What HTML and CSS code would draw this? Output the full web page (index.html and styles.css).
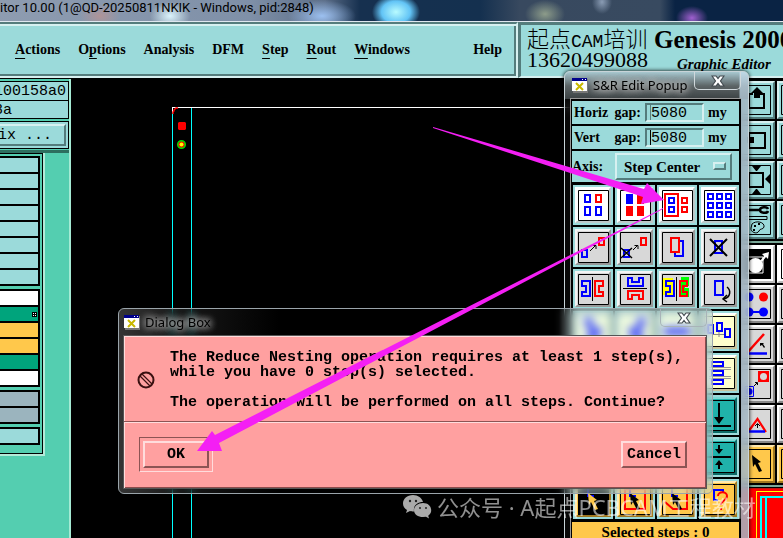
FILE: index.html
```html
<!DOCTYPE html>
<html lang="en">
<head>
<meta charset="utf-8">
<title>Graphic Editor</title>
<link rel="stylesheet" href="styles.css">
</head>
<body>
<svg class="defs" aria-hidden="true">
  <defs>
    <symbol id="close" viewBox="0 0 14 12"><path d="M1 1h4l2 2.500 2-2.500h4L9.500 6 13 11H9L7 8.500 5 11H1l3.500-5z" fill="#fff" stroke="#444c52" stroke-width="1.200"/></symbol>
    <symbol id="xwin" viewBox="0 0 16 15"><path d="M1 1h15v14H1z" fill="#777"/><path d="M0 0h15v13H0z" fill="#fff"/><path d="M0 0h15v3H0z" fill="#00008b"/><path d="M10 1h1v1h-1zM13 1h1v1h-1z" fill="#fff"/><path d="M4 5l7 7M11 5l-7 7" stroke="#c8b800" stroke-width="2"/></symbol>
    <symbol id="frame" viewBox="0 0 40 40"><path d="M5.500 5.500h30v30h-30z" fill="none" stroke="#000"/></symbol>
    <symbol id="pointer" viewBox="0 0 12 18"><path d="M0 0l9 7-3 1 4 8-3 1-4-8-2 3z"/></symbol>
  </defs>
</svg>

<div class="titlebar">itor 10.00 (1@QD-20250811NKIK - Windows, pid:2848)</div>

<header class="header">
  <nav class="menubar">
    <a href="#"><u>A</u>ctions</a>
    <a href="#">O<u>p</u>tions</a>
    <a href="#">Analysis</a>
    <a href="#">DFM</a>
    <a href="#"><u>S</u>tep</a>
    <a href="#"><u>R</u>out</a>
    <a href="#"><u>W</u>indows</a>
    <a href="#" class="help">Help</a>
  </nav>
  <div class="brand">
    <div class="contact"><div class="contact-name">起点<span>CAM</span>培训</div><div class="phone">13620499088</div></div>
    <div class="product"><h1>Genesis 2000</h1><p>Graphic Editor</p></div>
  </div>
</header>

<main class="main">
  <aside class="side">
    <div class="names"><div>100158a0</div><div>8a</div></div>
    <div class="matrix"><button type="button">ix ...</button></div>
    <div class="layers">
      <div class="stack">
        <ul><li></li><li></li><li></li><li></li><li></li><li></li><li></li><li></li></ul>
        <ul><li class="white"></li><li class="green"><svg width="5" height="5" viewBox="0 0 5 5"><path d="M0 0h5v5H0z"/><path d="M1 1h1v1H1zM3 1h1v1H3zM1 3h1v1H1zM3 3h1v1H3z" fill="#fff"/></svg></li><li class="amber"></li><li class="amber"></li><li class="green"></li><li class="white"></li></ul>
        <ul><li class="slate"></li><li class="slate"></li></ul>
        <ul><li></li></ul>
      </div>
    </div>
  </aside>

  <section class="canvas">
    <svg width="100%" height="100%">
      <path d="M101.500 30V900M120.500 30V900" stroke="#00ffff"/>
      <path d="M101 29.500H1200" stroke="#fff"/><path d="M101.500 29v6" stroke="#fff"/>
      <path d="M102 36v-2l1-1v-1l2-2h2" fill="none" stroke="#f00" stroke-width="1.500"/>
      <path d="M108 44h6l1 1v6l-1 1h-6l-1-1v-6z" fill="#f00"/>
      <circle cx="110.500" cy="66.500" r="3.800" fill="#f00" stroke="#00e000" stroke-width="1.500"/>
      <circle cx="110.500" cy="66.500" r="2" fill="#ff0"/>
    </svg>
  </section>

  <aside class="tools">
    <div class="toolgrid">
      <button type="button" aria-label="Up"><svg viewBox="2 2 34 34"><path d="M4.500 4.500h29v29h-29z" class="ln"/><path d="M16 13h-4v14h15V13h-4" class="ln2"/><path d="M20 6l6 6h-3v5h-6v-5h-3z"/></svg></button>
      <button type="button" aria-label="Up more"><svg viewBox="2 2 34 34"><path d="M4.500 4.500h29v29h-29z" class="ln"/></svg></button>
      <button type="button" aria-label="Left"><svg viewBox="2 2 34 34"><path d="M4.500 4.500h29v29h-29z" class="ln"/><path d="M12 12h16v15H12z" class="ln2"/><path d="M10 16h7v6h-7z"/></svg></button>
      <button type="button" aria-label="Right"><svg viewBox="2 2 34 34"><path d="M4.500 4.500h29v29h-29z" class="ln"/></svg></button>
      <button type="button" aria-label="Fit"><svg viewBox="2 2 34 34"><path d="M4.500 4.500h29v29h-29z" class="ln"/><path d="M12 12h14v14H12z" class="ln2"/><path d="M15 5h9l-4 5h-1zM28 18l5-5v10zM15 33h9l-4-5h-1z"/></svg></button>
      <button type="button" aria-label="Zoom"><svg viewBox="2 2 34 34"><path d="M4.500 4.500h29v29h-29z" class="ln"/></svg></button>
      <button type="button" aria-label="Setup"><svg viewBox="2 2 34 34"><path d="M4.500 4.500h29v29h-29z" class="ln"/><path d="M8 9h15M31 8c-1-3-8-2-8 1s7 4 8 1" fill="none" stroke="#000" stroke-width="2.500"/><path d="M8 15.500h22v3H8z" class="ln"/><path d="M15 23c4-4 13-2 12 3-1 3-4 1-5 4-2 4-9 1-8-3z" class="ln"/><path d="M17 24h2v2h-2zM21 22h2v2h-2zM16 28h2v2h-2z"/></svg></button>
      <button type="button" aria-label="Colors"><svg viewBox="2 2 34 34"><path d="M4.500 4.500h29v29h-29z" class="ln"/></svg></button>
    </div>
    <div class="rule"></div>
    <div class="toolgrid gray">
      <button type="button" class="w" aria-label="Drag"><svg viewBox="2 2 34 34"><path d="M4 4h30v30H4z"/><circle cx="18.500" cy="20.500" r="7.500" fill="#fff"/><path d="M9 12h17v16H9" fill="none" stroke="#fff"/><path d="M23 16l4-5-2-2 7-2-1 7-2-2-4 5z" fill="#fff"/></svg></button>
      <button type="button" class="w" aria-label="Drag many"><svg viewBox="2 2 34 34"><path d="M4.500 4.500h29v29h-29z" class="ln"/></svg></button>
      <button type="button" aria-label="Connect"><svg viewBox="2 2 34 34"><path d="M4.500 4.500h29v29h-29z" class="ln"/><g fill="#00f"><circle cx="12" cy="12" r="4.500"/><circle cx="12" cy="27" r="4.500"/><circle cx="26.500" cy="27" r="4.500"/><path d="M12 26h14v2H12z"/></g><circle cx="26.500" cy="12" r="4.500" fill="#f00"/></svg></button>
      <button type="button" aria-label="Connect all"><svg viewBox="2 2 34 34"><path d="M4.500 4.500h29v29h-29z" class="ln"/></svg></button>
      <button type="button" aria-label="Angle"><svg viewBox="2 2 34 34"><path d="M4.500 4.500h29v29h-29z" class="ln"/><path d="M10 28L27 9" stroke="#f00" stroke-width="2.500"/><path d="M10 28.500h20" stroke="#00f" stroke-width="2.500"/><path d="M23 18h4l-1 1 2 3-1 1-2-3-2 1z"/></svg></button>
      <button type="button" aria-label="Angle all"><svg viewBox="2 2 34 34"><path d="M4.500 4.500h29v29h-29z" class="ln"/></svg></button>
      <button type="button" aria-label="Swap"><svg viewBox="2 2 34 34"><path d="M4.500 4.500h29v29h-29z" class="ln"/><path d="M21 6h11v11H21z" fill="#f00"/><circle cx="26.500" cy="11.500" r="3.500" fill="#d8d8d8"/><path d="M8 21.500h8.500v10H8z" fill="none" stroke="#00f"/><circle cx="12" cy="26.500" r="3.500" fill="#00f"/><path d="M17 21l3-3M18 17.500h2.500V20" class="ln"/></svg></button>
      <button type="button" aria-label="Swap all"><svg viewBox="2 2 34 34"><path d="M4.500 4.500h29v29h-29z" class="ln"/></svg></button>
      <button type="button" aria-label="Triangle"><svg viewBox="2 2 34 34"><path d="M4.500 4.500h29v29h-29z" class="ln"/><path d="M11 27l9.500-13L29 27" fill="none" stroke="#f00" stroke-width="2.200"/><path d="M11 26.500h17" stroke="#00f" stroke-width="2.500"/><path d="M20.500 23v-4M18 21l2.500-2.500L23 21" class="ln"/></svg></button>
      <button type="button" aria-label="Triangle all"><svg viewBox="2 2 34 34"><path d="M4.500 4.500h29v29h-29z" class="ln"/></svg></button>
      <button type="button" class="o" aria-label="Select"><svg viewBox="2 2 34 34"><path d="M4.500 4.500h29v29h-29z" class="ln"/><use href="#pointer" x="15" y="10" width="12" height="18"/></svg></button>
      <button type="button" class="o" aria-label="Select area"><svg viewBox="2 2 34 34"><path d="M4.500 4.500h29v29h-29z" class="ln"/></svg></button>
    </div>
    <div class="rule"></div>
    <div class="overview"><div></div></div>
  </aside>
</main>

<section class="popup glass">
  <div class="caption"><svg width="16" height="15"><use href="#xwin"/></svg><h2>S&amp;R Edit Popup</h2><button type="button" class="close" aria-label="Close"><svg width="14" height="12"><use href="#close"/></svg></button></div>
  <div class="popup-body">
    <div class="field"><label for="hgap"><span>Horiz</span> <span>gap:</span></label><input id="hgap" value="5080"><span>my</span></div>
    <div class="field"><label for="vgap"><span>Vert</span> <span>gap:</span></label><input id="vgap" class="focus" value="5080"><span>my</span></div>
    <div class="field axis"><label for="axis">Axis:</label><div class="pick"><select id="axis"><option>Step Center</option></select><i></i></div></div>
    <div class="tiles">
      <button type="button" class="w" aria-label="Step table"><svg viewBox="4 4 32 32"><use href="#frame" width="40" height="40"/><g class="b"><path d="M12 10h5v7h-5zM12 22h5v8h-5zM23 22h5v8h-5z"/></g><path class="r" d="M23 10h5v7h-5z"/></svg></button>
      <button type="button" class="w" aria-label="Fill table"><svg viewBox="4 4 32 32"><use href="#frame" width="40" height="40"/><path d="M11 9h7v10h-7z" fill="#00f"/><path d="M22 9h7v10h-7zM11 21h7v10h-7zM22 21h7v10h-7z" fill="#f00"/></svg></button>
      <button type="button" class="w" aria-label="Reduce nesting"><svg viewBox="4 4 32 32"><use href="#frame" width="40" height="40"/><path class="r" d="M8 9h13v22H8zM25 13h5v5h-5zM25 22h5v5h-5z"/><path class="b" d="M12 13h5v5h-5zM12 22h5v5h-5z"/></svg></button>
      <button type="button" class="w" aria-label="Matrix"><svg viewBox="4 4 32 32"><use href="#frame" width="40" height="40"/><path class="b" d="M9 9h5v5H9zM18 9h5v5h-5zM27 9h5v5h-5zM9 18h5v5H9zM18 18h5v5h-5zM27 18h5v5h-5zM9 27h5v5H9zM18 27h5v5h-5zM27 27h5v5h-5z"/></svg></button>

      <button type="button" aria-label="Copy"><svg viewBox="4 4 32 32"><use href="#frame" width="40" height="40"/><path class="r" d="M26 11h5v7h-5z"/><path class="b" d="M9 23h5v7H9z"/><path d="M17 24l6-6M19.500 18.500H23V22" class="ln"/></svg></button>
      <button type="button" aria-label="Move"><svg viewBox="4 4 32 32"><use href="#frame" width="40" height="40"/><path class="r" d="M26 11h5v7h-5z"/><path class="b" d="M9 23h5v7H9z"/><path d="M6 21l11 10M17 21L6 31" stroke="#000" stroke-width="1.500"/><path d="M18 23l5-5M19.500 18.500H23V22" class="ln"/></svg></button>
      <button type="button" aria-label="Duplicate"><svg viewBox="4 4 32 32"><use href="#frame" width="40" height="40"/><path class="b" d="M18 14h8v15h-8z"/><path class="front" d="M14 11h8v14h-8z"/></svg></button>
      <button type="button" aria-label="Delete"><svg viewBox="4 4 32 32"><use href="#frame" width="40" height="40"/><path class="b" d="M16 14h7v12h-7z"/><path d="M11 12l17 17M28 12L11 29" stroke="#000" stroke-width="2"/></svg></button>

      <button type="button" aria-label="Mirror X"><svg viewBox="4 4 32 32"><use href="#frame" width="40" height="40"/><path class="b" d="M9 12h8v15H9v-4h4v-6H9z"/><path class="r" d="M30 12h-8v15h8v-4h-4v-6h4z"/><path d="M19.500 8v24" class="ln"/></svg></button>
      <button type="button" aria-label="Mirror Y"><svg viewBox="4 4 32 32"><use href="#frame" width="40" height="40"/><path class="b" d="M13 9h4v4h7V9h4v8H13z"/><path class="r" d="M13 30h4v-4h7v4h4v-8H13z"/><path d="M8 19.500h24" class="ln"/></svg></button>
      <button type="button" aria-label="Mirror copy"><svg viewBox="4 4 32 32"><use href="#frame" width="40" height="40"/><path d="M6 9h10v17H6z" fill="#ff0"/><path class="b" d="M9 12h8v15H9v-4h4v-6H9z"/><path d="M24 8h8v9h-4v2h4v9h-8z" fill="#0f0"/><path class="r" d="M30 12h-7v15h7v-4h-4v-6h4z"/><path d="M19.500 8v24" class="ln"/></svg></button>
      <button type="button" aria-label="Rotate"><svg viewBox="4 4 32 32"><use href="#frame" width="40" height="40"/><path class="b" d="M16 12h8v14h-8z"/><path d="M28 18c4 3 4 10-3 12M28 26l-4 4 4 3" fill="none" stroke="#000" stroke-width="1.500"/></svg></button>

      <button type="button" class="y" aria-label="Align left"><svg viewBox="4 4 32 32"><path d="M10 7h10v9h8v9l-6 5H12l4-8z" fill="#00f"/></svg></button>
      <button type="button" class="y" aria-label="Align right"><svg viewBox="4 4 32 32"><path d="M32 7H22v9h-8v9l6 5h10l-4-8z" fill="#00f"/></svg></button>
      <button type="button" class="y" aria-label="Align middle"><svg viewBox="4 4 32 32"><path d="M7 16h26v9H7z" fill="#00f"/></svg></button>
      <button type="button" class="y" aria-label="Space across"><svg viewBox="4 4 32 32"><use href="#frame" width="40" height="40"/><path d="M14 23.500h11M20 21v5" stroke="#888"/><path class="b" d="M9 14h5v8H9zM18 12h5v8h-5zM26 18h5v8h-5z"/></svg></button>
      <button type="button" class="y last" aria-label="Space down"><svg viewBox="4 4 32 32"><use href="#frame" width="40" height="40"/><path d="M10 14.500h22M10 16.500h22M10 23.500h22M10 25.500h22" stroke="#999"/><path class="b" d="M13 9h11v4H13zM13 18h11v4H13zM13 27h11v4H13z"/></svg></button>
      <button type="button" class="g last" aria-label="Snap down"><svg viewBox="4 4 32 32"><use href="#frame" width="40" height="40"/><path d="M8 30h24v2H8zM19 8h2v14h4l-5 7-5-7h4z"/></svg></button>
      <button type="button" class="g last" aria-label="Snap center"><svg viewBox="4 4 32 32"><use href="#frame" width="40" height="40"/><path d="M8 19h24v2H8zM19 8h2v4h3l-4 5-4-5h3zM19 32h2v-4h3l-4-5-4 5h3z"/></svg></button>

      <button type="button" class="o" aria-label="Pick"><svg viewBox="4 4 32 32"><path d="M5 5h31v31H5z"/><path class="b" d="M15 9v8h6"/><use href="#pointer" x="15" y="14" width="12" height="18" fill="#ffc84b"/></svg></button>
      <button type="button" class="o" aria-label="Pick rectangle"><svg viewBox="4 4 32 32"><use href="#frame" width="40" height="40"/><path class="r" d="M10 10h20v20H10z"/><path class="b" d="M15 9v8h6"/><use href="#pointer" x="15" y="14" width="12" height="18"/></svg></button>
      <button type="button" class="o" aria-label="Pick polygon"><svg viewBox="4 4 32 32"><use href="#frame" width="40" height="40"/><path class="r" d="M30 10v20H16l-8-7"/><path class="b" d="M15 9v8h6"/><use href="#pointer" x="15" y="14" width="12" height="18"/></svg></button>
      <button type="button" class="o" aria-label="Pick query"><svg viewBox="4 4 32 32"><use href="#frame" width="40" height="40"/><path class="b" d="M24 14v-3h-9v10h4"/><path class="r" d="M19 17c0-5 9-5 9 0s-6 4-6 9M22 29v2"/></svg></button>
    </div>
    <div class="count">Selected steps : 0</div>
  </div>
</section>

<section class="dialog glass" role="dialog">
  <div class="caption"><svg width="16" height="15"><use href="#xwin"/></svg><h2>Dialog Box</h2><button type="button" class="close" aria-label="Close"><svg width="14" height="12"><use href="#close"/></svg></button></div>
  <div class="dialog-body">
    <div class="message">
      <svg width="18" height="18" viewBox="0 0 18 18" fill="none" stroke="#3a1010"><circle cx="9" cy="9" r="7.500" stroke-width="2"/><path d="M3 5l10 10M5 3l10 10" stroke-width="1.200"/></svg>
      <p>The Reduce Nesting operation requires at least 1 step(s),<br>while you have 0 step(s) selected.<br><br>The operation will be performed on all steps. Continue?</p>
    </div>
    <div class="actions"><span class="default"><button type="button">OK</button></span><button type="button">Cancel</button></div>
  </div>
</section>

<svg class="arrows" width="783" height="538" viewBox="0 0 783 538" aria-hidden="true">
  <g fill="#f41ff4">
    <path d="M433 127L644 189 647 183 664 200 641 204 643 197 433 128z"/>
    <path d="M663 208L215 435 212 431 197 451 222 451 219 443 663 209z"/>
  </g>
</svg>

<div class="watermark">
  <svg width="29" height="24" viewBox="0 0 29 24"><path d="M10 0C4 0 0 4 0 8.500c0 3 1.500 5 4 6.500l-1 3 4-2c1 .3 2 .4 4 .4C10 10 15 7 20 7 19 3 15 0 10 0z" fill="#aaa"/><path d="M20 8c-5 0-9 3-9 7.200S15 22 20 22l3-.3 3 1.700-.800-2.700c2-1.300 3-3.200 3-5.200C28.200 11 25 8 20 8z" fill="#aaa"/><g fill="#222"><circle cx="7" cy="6" r="1.200"/><circle cx="13" cy="6" r="1.200"/><circle cx="17" cy="13" r="1"/><circle cx="23" cy="13" r="1"/></g></svg>
  <span>公众号 · A起点PCBCAM工程教材</span>
</div>
</body>
</html>
```
FILE: styles.css
```css
:root {
  --teal: #9bdada;
  --teal-dark: #547c7c;
  --teal-light: #d6f0f0;
  --green: #54ceb0;
  --pink: #ffa0a0;
  --amber: #ffc84b;
}
* { box-sizing: border-box; }
body {
  margin: 0;
  height: 100vh;
  display: flex;
  flex-direction: column;
  overflow: hidden;
  background: #000;
  color: #000;
  font: bold 14px/16px "Liberation Serif", serif;
}
h1, h2, p, ul { margin: 0; padding: 0; }
button, input, select { font: inherit; color: inherit; border-radius: 0; padding: 0; margin: 0; }
svg { display: block; }
.defs { position: absolute; width: 0; height: 0; }
.ln { fill: none; stroke: #000; }
.ln2 { fill: none; stroke: #000; stroke-width: 2; }
.b { fill: none; stroke: #00f; stroke-width: 2; }
.r { fill: none; stroke: #f00; stroke-width: 2; }
.front { fill: #d8d8d8; stroke: #f00; stroke-width: 2; }

.titlebar {
  flex: none;
  height: 22px;
  border-bottom: 1px solid #dfe6ee;
  font: 13px/15px Roboto, sans-serif;
  white-space: nowrap;
  background:
    radial-gradient(ellipse 24px 18px at 396px 12px, #b8fbff, #62c4f6 60%, transparent),
    radial-gradient(ellipse 34px 16px at 322px 16px, #9cc0f0, transparent),
    radial-gradient(ellipse 20px 14px at 545px 14px, #8d9c8a, transparent),
    radial-gradient(ellipse 16px 12px at 692px 18px, #a060d0, transparent),
    radial-gradient(ellipse 10px 12px at 602px 2px, #8a9cb4, transparent),
    radial-gradient(ellipse 20px 14px at 170px 16px, #dcf4fc, transparent),
    radial-gradient(ellipse 20px 12px at 100px 16px, #b09498, transparent),
    linear-gradient(to right, #8e9cb0 0, #7f90a8 250px, #5c6e88 325px, #16304f 360px, #14304f 480px, #38495f 520px, #384a60 660px, #0a2344 675px);
}

.header { flex: none; height: 56px; display: flex; overflow: hidden; background: var(--teal); }
.menubar {
  width: 518px;
  flex: none;
  display: flex;
  align-items: center;
  gap: 18px;
  padding: 0 14px 0 15px;
  border-top: 2px solid var(--teal-dark);
  border-bottom: 2px solid var(--teal-light);
  border-right: 2px solid var(--teal-light);
  box-shadow: inset 0 2px var(--teal-light), inset -2px -2px var(--teal-dark);
}
.menubar a { color: inherit; text-decoration: none; }
.menubar u { text-underline-offset: 4px; }
.help { margin-left: auto; }
.brand {
  flex: 1;
  display: flex;
  gap: 6px;
  padding: 2px 0 0 6px;
  border-top: 3px solid var(--teal-dark);
  border-left: 3px solid var(--teal-dark);
  border-bottom: 2px solid var(--teal-light);
  white-space: nowrap;
}
.contact { font: 22px/22px "Liberation Serif", "Noto Sans CJK SC", serif; }
.contact-name { height: 22px; line-height: 20px; font-family: "Noto Sans CJK SC", sans-serif; font-weight: 300; }
.contact-name span { font: 18px/20px "Liberation Mono", monospace; }
.product h1 { font-size: 25px; line-height: 26px; }
.product p { font-size: 15px; line-height: 20px; font-style: italic; padding: 1px 0 0 23px; }

.main { flex: 1; display: flex; min-height: 0; overflow: hidden; }
.side {
  width: 71px;
  flex: none;
  overflow: hidden;
  margin-top: 1px;
  background: var(--green);
  border-right: 2px solid #a5ead4;
  font: 15px/19px "Liberation Mono", monospace;
}
.names { margin-top: 2px; border: solid #000; border-width: 1px 1px 1px 0; background: var(--teal); }
.names div { height: 18px; text-indent: -6px; white-space: nowrap; }
.names div + div { border-top: 1px solid #000; }
.matrix { margin-top: 2px; border: solid #000; border-width: 1px 1px 1px 0; background: var(--teal); padding: 2px; padding-left: 0; }
.matrix button {
  display: block;
  width: 100%;
  height: 22px;
  border: 2px solid;
  border-color: var(--teal-light) var(--teal-dark) var(--teal-dark) var(--teal);
  border-left: 0;
  background: var(--teal);
  text-align: left;
  text-indent: -2px;
}
.layers { margin: 1px -2px 0 0; border-top: 3px solid #2d6f5f; }
.stack {
  width: 45px;
  display: flex;
  flex-direction: column;
  gap: 3px;
  padding: 3px 3px 9px 0;
  border: solid #b4ead8;
  border-width: 0 2px 2px 0;
  box-shadow: inset -1px 1px #000, inset 0 -1px #000;
}
.stack ul {
  width: 40px;
  display: grid;
  gap: 2px;
  padding: 2px 2px 2px 0;
  background: #000;
  list-style: none;
}
.stack li { height: 14px; background: var(--teal); }
.stack li svg { margin: 5px 1px 0 auto; }
.stack .white { background: #fff; }
.stack .green { background: #00a47c; }
.stack .amber { background: var(--amber); }
.stack .slate { background: #9bb4be; }
.canvas { flex: 1; min-width: 0; overflow: hidden; }

.tools { width: 46px; flex: none; display: flex; flex-direction: column; overflow: visible; padding-top: 3px; }
.toolgrid { display: grid; grid-template-columns: 38px 38px; gap: 2px; }
.toolgrid button {
  height: 38px;
  border: 2px solid;
  border-color: var(--teal-light) var(--teal-dark) var(--teal-dark) var(--teal-light);
  background: var(--teal);
}
.toolgrid button svg { width: 34px; height: 34px; }
.gray button { background: #d8d8d8; border-color: #fff #888 #888 #fff; }
.toolgrid .w { background: #fff; border-color: #fff #bbb #bbb #fff; }
.toolgrid .o { background: var(--amber); border-color: #ffe9b0 #a07820 #a07820 #ffe9b0; }
.rule { flex: none; height: 2px; margin: 2px -40px 2px 0; background: #7aa898; }
.overview { flex: 1; margin: -1px -40px 0 0; padding: 2px 0 0 19px; background: #f00; border-top: 1px solid #c01010; }
.overview div { height: 100%; border: solid #ff0; border-width: 1px 0 0 1px; padding: 4px 0 0 3px; }
.overview div::before {
  content: "";
  display: block;
  height: 100%;
  border: solid #0ff;
  border-width: 2px 0 0 2px;
  background: linear-gradient(to right, #f00 3px, #0ff 3px, #0ff 5px, #f00 5px);
}

.glass {
  position: absolute;
  border: 1px solid #9aa4aa;
  border-radius: 6px;
  backdrop-filter: blur(4px);
}
.caption { height: 26px; display: flex; align-items: center; gap: 5px; }
.caption h2 { font: 13px/16px "Noto Sans", sans-serif; text-shadow: 0 0 8px #fff, 0 0 8px #aaa, 0 0 6px #aaa; }
.close {
  align-self: flex-start;
  width: 47px;
  height: 18px;
  margin-left: auto;
  border: 1px solid #a8b4b8;
  border-top: 0;
  border-radius: 0 0 5px 5px;
  background: none;
  display: flex;
  align-items: center;
  justify-content: center;
}

.popup {
  top: 71px;
  bottom: -8px;
  left: 564px;
  width: 185px;
  display: flex;
  flex-direction: column;
  padding: 0 7px 0 5px;
  border-color: #c8d4d8;
  box-shadow: 0 0 4px #000;
  background:
    linear-gradient(to left, #c8e0f0b0 8px, transparent 9px),
    linear-gradient(to bottom, #a8c8d0, #5c6466 14px, #3c4244 27px, transparent 27px),
    #10101080;
}
.popup .caption { padding-left: 2px; }
.popup .close { border-color: #d0d8dc; }
.popup-body {
  flex: 1;
  min-height: 0;
  border: solid #999;
  border-width: 1px 0 0 1px;
  background: #000;
  padding: 2px 2px 0 1px;
  display: flex;
  flex-direction: column;
  gap: 2px;
}
.field { flex: none; height: 23px; display: flex; align-items: center; background: var(--teal); padding-left: 2px; }
.field label { width: 67px; display: flex; justify-content: space-between; }
.field input {
  width: 59px;
  height: 19px;
  margin: 0 4px;
  padding: 1px 0 0 4px;
  border: 2px solid;
  border-color: var(--teal-dark) var(--teal-light) var(--teal-light) var(--teal-dark);
  background: linear-gradient(to right, transparent 3px, #5b8080 3px, #5b8080 4px, transparent 4px) var(--teal);
  font: 15px/15px "Liberation Mono", monospace;
}
.field .focus { background: linear-gradient(to right, transparent 3px, #000 3px, #000 4px, transparent 4px) var(--teal); }
.axis { height: 31px; padding-left: 0; }
.axis label { width: 43px; }
.pick { position: relative; width: 117px; }
.pick select {
  appearance: none;
  width: 100%;
  height: 27px;
  padding-left: 7px;
  border: 2px solid;
  border-color: var(--teal-light) var(--teal-dark) var(--teal-dark) var(--teal-light);
  background: var(--teal);
  font-size: 15px;
}
.pick i {
  position: absolute;
  right: 6px;
  top: 9px;
  width: 13px;
  height: 8px;
  border: 2px solid;
  border-color: var(--teal-light) var(--teal-dark) var(--teal-dark) var(--teal-light);
}
.tiles { flex: none; display: grid; grid-template-columns: repeat(4, 40px); gap: 2px; padding: 1px 0 1px 1px; }
.tiles button { height: 40px; border: 2px solid var(--teal); background: #d8d8d8; }
.tiles svg { width: 36px; height: 36px; border: 2px solid; border-color: #f4f4f4 #999 #999 #f4f4f4; }
.tiles .w { background: #fff; }
.tiles .w svg { border-color: #fff #bcc8c8 #bcc8c8 #fff; }
.tiles .y { background: #ffffcc; }
.tiles .y svg { border-color: #fff #c8c49c #c8c49c #fff; }
.tiles .g { background: #20b2aa; }
.tiles .g svg { border-color: #7cd8d4 #0c6a66 #0c6a66 #7cd8d4; }
.tiles .o { background: var(--amber); }
.tiles .o svg { border-color: #ffe9b0 #a07820 #a07820 #ffe9b0; }
.tiles .last { grid-column: 4; }
.count { flex: 1; background: var(--amber); text-align: center; line-height: 20px; font-size: 15px; }

.dialog {
  top: 308px;
  left: 118px;
  width: 595px;
  padding: 0 5px 4px 4px;
  background: linear-gradient(to right, #70707078 0, #5050504d 60px, #0000 160px, #0000 440px, #d0f0f066 456px);
}
.dialog .caption { padding-left: 1px; }
.dialog-body {
  border: 1px solid #555;
  box-shadow: inset 1px 1px #ffdcdc, inset -1px -1px #8c4c4c;
  background: var(--pink);
  font: bold 15px/15px "Liberation Mono", monospace;
}
.dialog-body .message { display: flex; align-items: center; gap: 15px; padding: 14px 13px 11px; border-bottom: 1px solid #8c5454; }
.message p { white-space: nowrap; }
.actions {
  display: flex;
  justify-content: space-between;
  align-items: center;
  padding: 14px 19px 16px 15px;
  border-top: 1px solid #ffdcdc;
}
.actions button {
  display: block;
  width: 66px;
  height: 27px;
  border: 2px solid;
  border-color: #ffdcdc #8c5454 #8c5454 #ffdcdc;
  background: var(--pink);
}
.default { padding: 3px; border: 1px solid; border-color: #8c5454 #ffdcdc #ffdcdc #8c5454; }

.arrows { position: absolute; top: 0; left: 0; pointer-events: none; }
.watermark {
  position: absolute;
  left: 403px;
  top: 494px;
  display: flex;
  align-items: center;
  gap: 5px;
  white-space: nowrap;
  color: #ffffff90;
  font: 22px/26px "Noto Sans", "Noto Sans CJK SC", sans-serif;
}
```
